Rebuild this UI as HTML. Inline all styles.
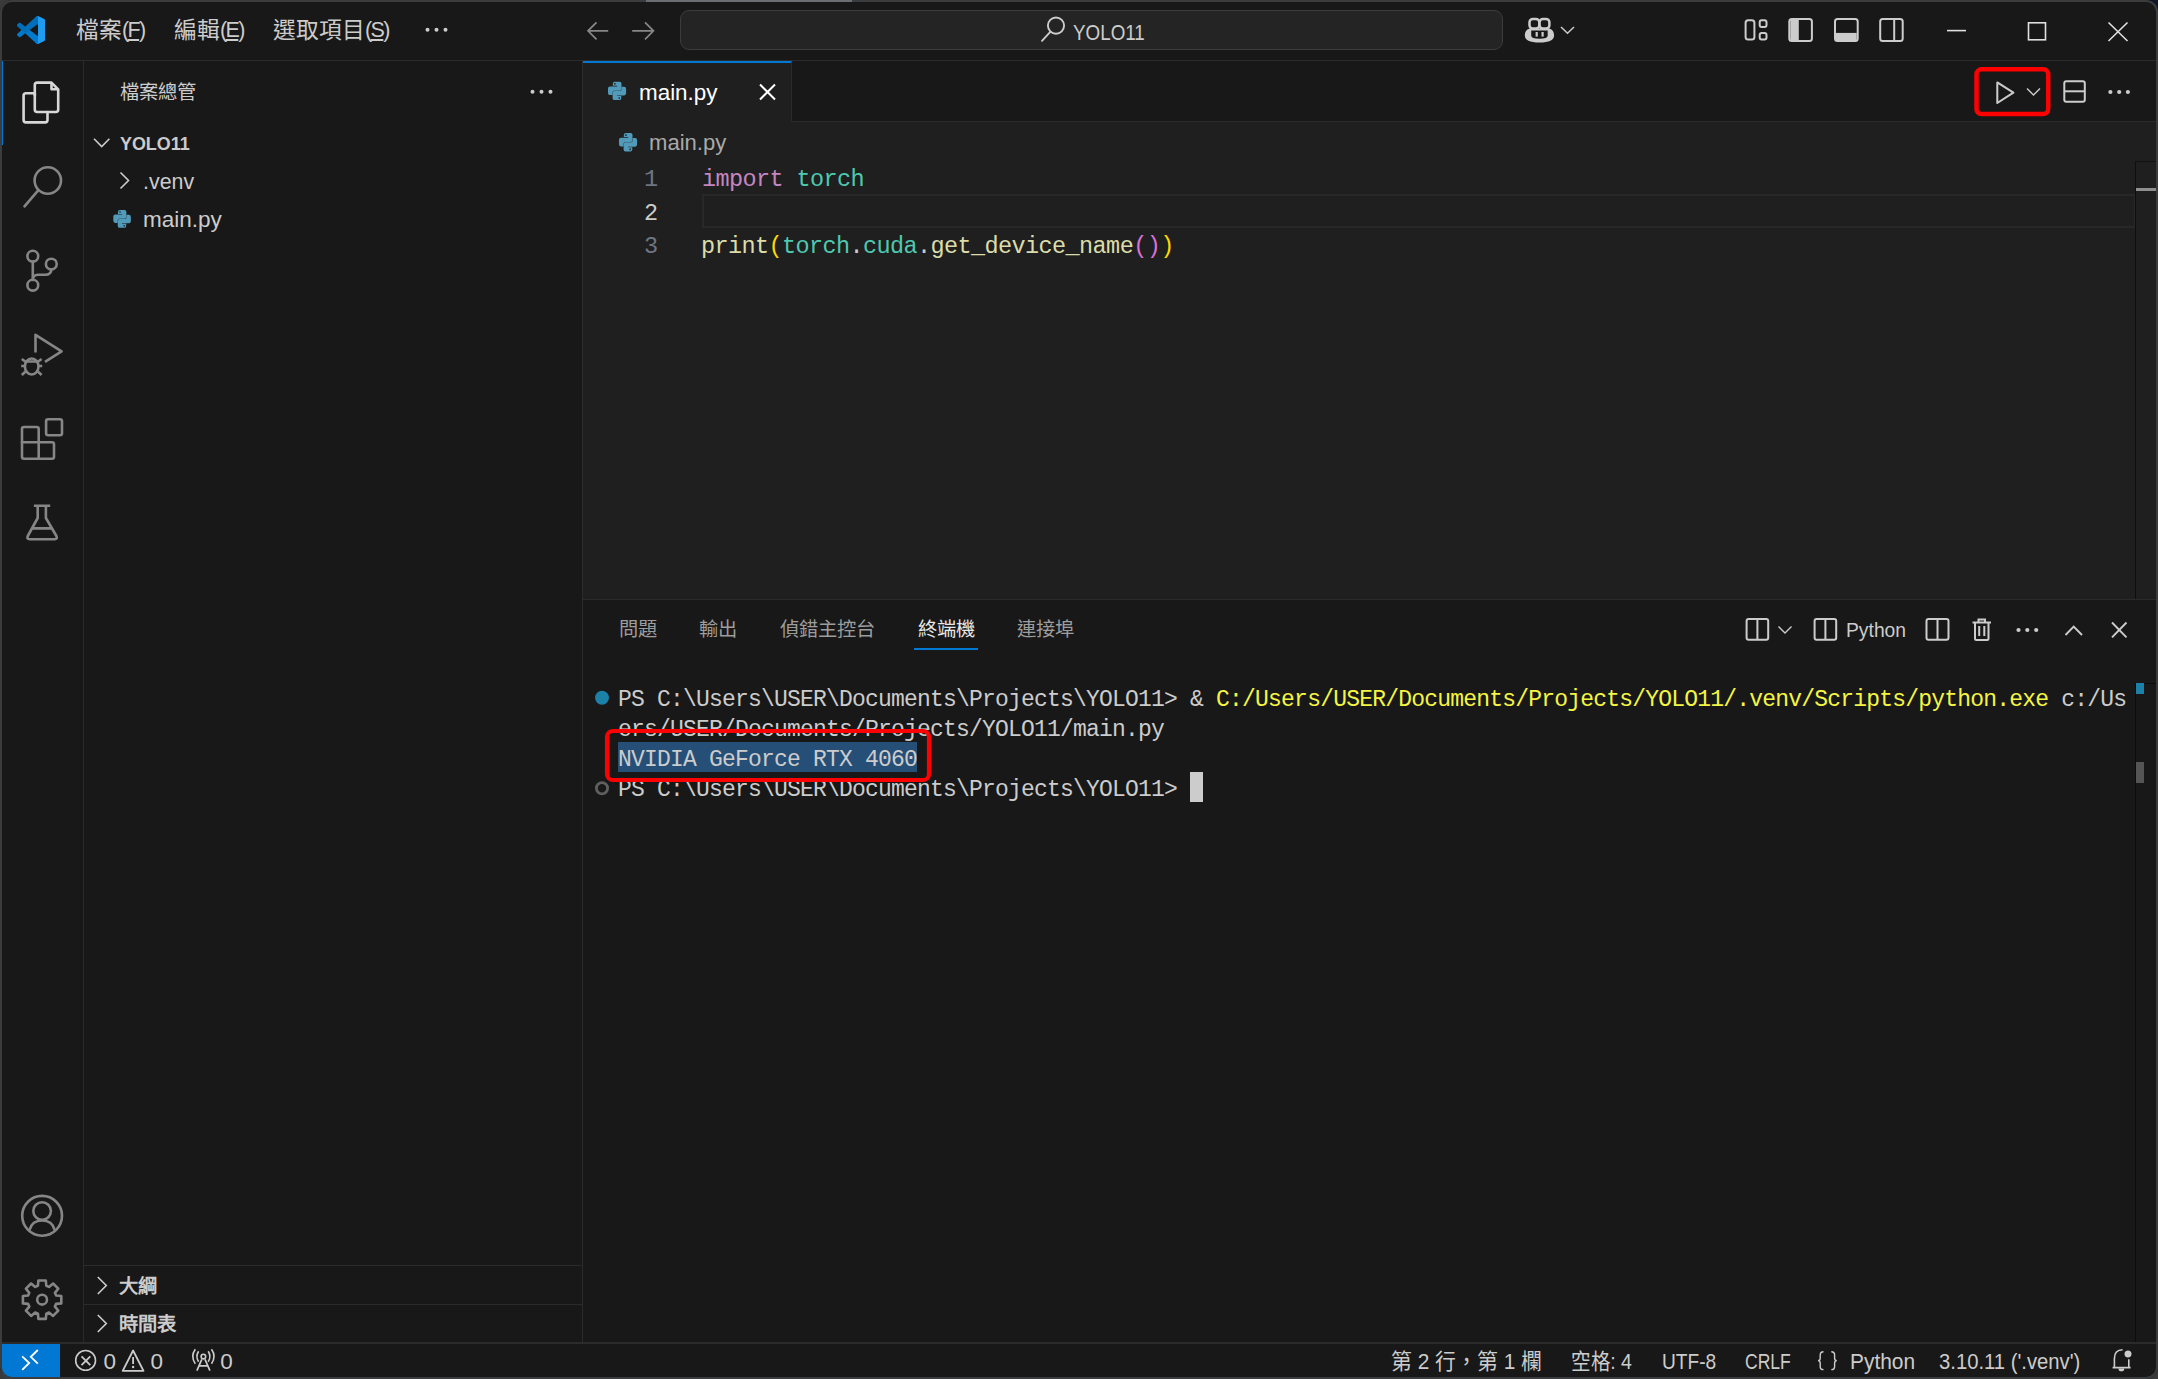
<!DOCTYPE html>
<html lang="zh-TW">
<head>
<meta charset="utf-8">
<style>
*{margin:0;padding:0;box-sizing:border-box}
html,body{width:2158px;height:1379px;overflow:hidden;background:#3a3a3a}
body{font-family:"Liberation Sans",sans-serif;color:#cccccc;position:relative}
.a{position:absolute}
#win{position:absolute;left:0;top:0;width:2158px;height:1379px;background:#181818;border-radius:12px;overflow:hidden}
#frame{position:absolute;left:0;top:0;width:2158px;height:1379px;border:2px solid #3b3c3e;border-radius:12px;pointer-events:none}
.m{font-family:"Liberation Mono",monospace}
.t{position:absolute;white-space:nowrap;line-height:1}
svg.ov{position:absolute;left:0;top:0;width:2158px;height:1379px;overflow:visible}
</style>
</head>
<body>
<div class="a" style="left:0;top:0;width:12px;height:12px;background:#3a3a3a"></div>
<div class="a" style="left:2146px;top:0;width:12px;height:12px;background:#0f1626"></div>
<div id="win">
  <!-- ============ TITLE BAR ============ -->
  <div class="a" style="left:0;top:60px;width:2158px;height:1px;background:#2b2b2b"></div>
  <div class="t" style="left:76px;top:19px;font-size:22.75px">檔案<span style="font-size:21.5px;letter-spacing:-1.6px;position:relative;top:-1.5px">(<u>F</u>)</span></div>
  <div class="t" style="left:174px;top:19px;font-size:22.75px">編輯<span style="font-size:21.5px;letter-spacing:-1.6px;position:relative;top:-1.5px">(<u>E</u>)</span></div>
  <div class="t" style="left:273px;top:19px;font-size:22.75px">選取項目<span style="font-size:21.5px;letter-spacing:-1.6px;position:relative;top:-1.5px">(<u>S</u>)</span></div>
  <div class="a" style="left:680px;top:10px;width:823px;height:40px;background:#242424;border:1px solid #3c3c3c;border-radius:9px"></div>
  <div class="t" style="left:1073px;top:21.6px;font-size:22.2px;color:#cccccc;transform:scaleX(0.848);transform-origin:0 0">YOLO11</div>

  <!-- ============ ACTIVITY BAR ============ -->
  <div class="a" style="left:83px;top:61px;width:1px;height:1282px;background:#2b2b2b"></div>
  <div class="a" style="left:2px;top:61px;width:1.3px;height:84px;background:#0078d4"></div>

  <!-- ============ SIDEBAR ============ -->
  <div class="a" style="left:582px;top:61px;width:1px;height:1282px;background:#2b2b2b"></div>
  <div class="t" style="left:120px;top:83px;font-size:19.25px;color:#cccccc">檔案總管</div>
  <div class="t" style="left:119.5px;top:134px;font-size:19.25px;font-weight:700;color:#cccccc;transform:scaleX(0.93);transform-origin:0 0">YOLO11</div>
  <div class="t" style="left:143px;top:170px;font-size:22.75px;color:#cccccc;transform:scaleX(0.94);transform-origin:0 0">.venv</div>
  <div class="t" style="left:143px;top:208px;font-size:22.75px;color:#cccccc;transform:scaleX(0.99);transform-origin:0 0">main.py</div>
  <div class="a" style="left:84px;top:1265px;width:498px;height:1px;background:#2b2b2b"></div>
  <div class="a" style="left:84px;top:1304px;width:498px;height:1px;background:#2b2b2b"></div>
  <div class="t" style="left:119px;top:1276.5px;font-size:19.25px;font-weight:700;color:#cccccc">大綱</div>
  <div class="t" style="left:119px;top:1314.5px;font-size:19.25px;font-weight:700;color:#cccccc">時間表</div>

  <!-- ============ EDITOR ============ -->
  <div class="a" style="left:583px;top:122px;width:1575px;height:477px;background:#1f1f1f"></div>
  <div class="a" style="left:792px;top:121px;width:1366px;height:1px;background:#2b2b2b"></div>
  <div class="a" style="left:583px;top:61px;width:209px;height:61px;background:#1f1f1f;border-top:2px solid #0078d4;border-right:1px solid #2b2b2b"></div>
  <div class="t" style="left:638.5px;top:81px;font-size:22.75px;color:#ffffff;transform:scaleX(0.985);transform-origin:0 0">main.py</div>
  <div class="t" style="left:649px;top:130.5px;font-size:22.75px;color:#a9a9a9;transform:scaleX(0.97);transform-origin:0 0">main.py</div>
  <!-- line highlight -->
  <div class="a" style="left:702px;top:194px;width:1434px;height:34px;border:2px solid #282828"></div>
  <!-- scrollbar track -->
  <div class="a" style="left:2135px;top:161px;width:1px;height:438px;background:#0e0e0e"></div>
  <div class="a" style="left:2135px;top:161px;width:21px;height:1px;background:#111111"></div>
  <div class="a" style="left:2136px;top:188px;width:20px;height:3px;background:#8f8f8f"></div>
  <div class="t m" style="left:644px;top:168px;font-size:23.5px;color:#6e7681">1</div>
  <div class="t m" style="left:644px;top:202px;font-size:23.5px;color:#cccccc">2</div>
  <div class="t m" style="left:644px;top:235px;font-size:23.5px;color:#6e7681">3</div>
  <div class="t m" style="left:702px;top:168px;font-size:23.5px;letter-spacing:-0.6px"><span style="color:#c586c0">import</span> <span style="color:#4ec9b0">torch</span></div>
  <div class="t m" style="left:701px;top:235px;font-size:23.5px;letter-spacing:-0.6px"><span style="color:#dcdcaa">print</span><span style="color:#ffd700">(</span><span style="color:#4ec9b0">torch</span><span style="color:#cccccc">.</span><span style="color:#4ec9b0">cuda</span><span style="color:#cccccc">.</span><span style="color:#dcdcaa">get_device_name</span><span style="color:#da70d6">()</span><span style="color:#ffd700">)</span></div>

  <!-- ============ PANEL ============ -->
  <div class="a" style="left:583px;top:599px;width:1575px;height:1px;background:#2b2b2b"></div>
  <div class="t" style="left:619px;top:620px;font-size:19.25px;color:#9d9d9d">問題</div>
  <div class="t" style="left:699px;top:620px;font-size:19.25px;color:#9d9d9d">輸出</div>
  <div class="t" style="left:780px;top:620px;font-size:19.25px;color:#9d9d9d">偵錯主控台</div>
  <div class="t" style="left:918px;top:620px;font-size:19.25px;color:#e7e7e7">終端機</div>
  <div class="a" style="left:914px;top:648px;width:64px;height:2px;background:#0078d4"></div>
  <div class="t" style="left:1017px;top:620px;font-size:19.25px;color:#9d9d9d">連接埠</div>
  <div class="t" style="left:1846px;top:620.2px;font-size:20px;color:#cccccc;transform:scaleX(0.965);transform-origin:0 0">Python</div>
  <!-- terminal -->
  <div class="a" style="left:618px;top:742px;width:299px;height:30px;background:#264f78"></div>
  <div class="t m" style="left:618px;top:689px;font-size:23px;letter-spacing:-0.8px;color:#cccccc">PS C:\Users\USER\Documents\Projects\YOLO11&gt; &amp; <span style="color:#f5f543">C:/Users/USER/Documents/Projects/YOLO11/.venv/Scripts/python.exe</span> c:/Us</div>
  <div class="t m" style="left:618px;top:719px;font-size:23px;letter-spacing:-0.8px;color:#cccccc">ers/USER/Documents/Projects/YOLO11/main.py</div>
  <div class="t m" style="left:618px;top:749px;font-size:23px;letter-spacing:-0.8px;color:#cccccc">NVIDIA GeForce RTX 4060</div>
  <div class="t m" style="left:618px;top:779px;font-size:23px;letter-spacing:-0.8px;color:#cccccc">PS C:\Users\USER\Documents\Projects\YOLO11&gt;</div>
  <div class="a" style="left:1190px;top:772px;width:13px;height:30px;background:#cccccc"></div>
  <div class="a" style="left:2135px;top:683px;width:1px;height:659px;background:#0c0c0c"></div>
  <div class="a" style="left:2135px;top:683px;width:21px;height:1px;background:#0c0c0c"></div>
  <div class="a" style="left:2136px;top:683px;width:8px;height:11px;background:#1b81a8"></div>
  <div class="a" style="left:2136px;top:762px;width:8px;height:21px;background:#555555"></div>

  <!-- ============ STATUS BAR ============ -->
  <div class="a" style="left:0;top:1342px;width:2158px;height:2px;background:#2b2b2b"></div>
  <div class="a" style="left:2px;top:1344px;width:58px;height:35px;background:#0078d4"></div>
  <div class="t" style="left:103.5px;top:1351.2px;font-size:22.5px">0</div>
  <div class="t" style="left:150.5px;top:1351.2px;font-size:22.5px">0</div>
  <div class="t" style="left:220.3px;top:1351.2px;font-size:22.5px">0</div>
  <div class="t" style="left:1391px;top:1351.2px;font-size:22px;transform:scaleX(0.95);transform-origin:0 0">第 2 行，第 1 欄</div>
  <div class="t" style="left:1571px;top:1351.2px;font-size:22px;transform:scaleX(0.89);transform-origin:0 0">空格: 4</div>
  <div class="t" style="left:1661.5px;top:1351.2px;font-size:22.5px;transform:scaleX(0.85);transform-origin:0 0">UTF-8</div>
  <div class="t" style="left:1745px;top:1351.2px;font-size:22.5px;transform:scaleX(0.78);transform-origin:0 0">CRLF</div>
  <div class="t" style="left:1850px;top:1351.2px;font-size:22.5px;transform:scaleX(0.93);transform-origin:0 0">Python</div>
  <div class="t" style="left:1939px;top:1351.2px;font-size:22.5px;transform:scaleX(0.9);transform-origin:0 0">3.10.11 ('.venv')</div>
</div>
<svg class="ov" width="2158" height="1379" viewBox="0 0 2158 1379">
  <defs>
    <g id="py">
      <path d="M6.8,0 H11.6 Q13.5,0 13.5,1.9 V7.3 Q13.5,9.1 11.7,9.1 H6.3 Q4.5,9.1 4.5,11 V13.4 H2 Q0,13.4 0,11.2 V6.8 Q0,4.7 2,4.7 H9.1 V4.1 H4.8 V1.9 Q4.8,0 6.8,0 Z" fill="#519aba"/>
      <path d="M6.8,0 H11.6 Q13.5,0 13.5,1.9 V7.3 Q13.5,9.1 11.7,9.1 H6.3 Q4.5,9.1 4.5,11 V13.4 H2 Q0,13.4 0,11.2 V6.8 Q0,4.7 2,4.7 H9.1 V4.1 H4.8 V1.9 Q4.8,0 6.8,0 Z" fill="#519aba" transform="rotate(180 9.05 9.2)"/>
      <circle cx="6.9" cy="2.1" r="0.85" fill="#1f1f1f"/>
      <circle cx="11.2" cy="16.3" r="0.85" fill="#1f1f1f"/>
    </g>
  </defs>
  <!-- VS Code logo -->
  <g transform="translate(17,16) scale(0.28)">
    <path fill="#007acc" d="M96.46 10.8L75.86.87a6.23 6.23 0 0 0-7.1 1.2L29.33 38.05 12.15 25a4.16 4.16 0 0 0-5.32.24L1.33 30.26a4.16 4.16 0 0 0 0 6.16L16.23 50 1.33 63.58a4.16 4.16 0 0 0 0 6.16l5.5 5a4.16 4.16 0 0 0 5.32.24l17.18-13.05 39.43 35.98a6.23 6.23 0 0 0 7.1 1.2l20.6-9.92A6.24 6.24 0 0 0 100 83.6V16.4a6.24 6.24 0 0 0-3.54-5.6zM75 72.73L45.1 50 75 27.27z"/>
    <path fill="#0065a9" d="M68.76 2.07L29.33 38.05 12.15 25a4.16 4.16 0 0 0-5.32.24L1.33 30.26a4.16 4.16 0 0 0 0 6.16L16.23 50 29.33 61.95 45.1 50 75 27.27V4.7a3.66 3.66 0 0 0-6.24-2.63z" opacity="0.55"/>
    <path fill="#1f9cf0" d="M75.86 .87L96.46 10.8A6.24 6.24 0 0 1 100 16.4V83.6a6.24 6.24 0 0 1-3.54 5.62L75.86 99.13a6.23 6.23 0 0 1-7.1-1.2A3.66 3.66 0 0 0 75 95.3V4.7a3.66 3.66 0 0 0-6.24-2.63A6.23 6.23 0 0 1 75.86.87z"/>
  </g>
  <!-- menu dots -->
  <g fill="#cccccc"><circle cx="427.5" cy="29.8" r="2"/><circle cx="436.5" cy="29.8" r="2"/><circle cx="445.5" cy="29.8" r="2"/></g>
  <!-- back/forward -->
  <g fill="none" stroke="#878787" stroke-width="1.7" stroke-linecap="butt" stroke-linejoin="miter">
    <path d="M588,30.8 H608.2 M596.5,22.3 L588,30.8 L596.5,39.3"/>
    <path d="M632.2,30.8 H653.5 M645,22.3 L653.5,30.8 L645,39.3"/>
  </g>
  <!-- command center search -->
  <g fill="none" stroke="#cccccc" stroke-width="1.9" stroke-linecap="round">
    <circle cx="1056" cy="25.6" r="8.1"/>
    <path d="M1042,40.8 L1050.3,31.8"/>
  </g>
  <!-- copilot -->
  <path fill-rule="evenodd" fill="#cccccc" d="M1529.5,28.4 Q1524.8,30 1524.8,35.2 Q1524.8,42.5 1539.45,42.5 Q1554.1,42.5 1554.1,35.2 Q1554.1,30 1549.4,28.4 Z M1531.2,30.6 H1547.7 V35.6 Q1547.7,38.8 1539.45,38.8 Q1531.2,38.8 1531.2,35.6 Z"/>
  <g fill="#181818" stroke="#cccccc" stroke-width="2.5">
    <rect x="1529.5" y="18.9" width="9.8" height="9.6" rx="3.3"/>
    <rect x="1539.6" y="18.9" width="9.8" height="9.6" rx="3.3"/>
  </g>
  <g fill="#cccccc"><rect x="1535.6" y="32" width="2.2" height="4.6"/><rect x="1541.5" y="32" width="2.2" height="4.6"/></g>
  <path d="M1561,27 L1567.5,33.3 L1574,27" fill="none" stroke="#cccccc" stroke-width="1.5"/>
  <!-- layout controls -->
  <g fill="none" stroke="#cccccc" stroke-width="2">
    <rect x="1745.6" y="20.2" width="8.8" height="19.2" rx="2.5"/>
    <rect x="1759.7" y="20.3" width="6.8" height="6.6" rx="2"/>
    <rect x="1759.7" y="33" width="6.8" height="6.4" rx="2"/>
    <rect x="1789.3" y="18.9" width="22.6" height="22.2" rx="2.5"/>
    <rect x="1835" y="18.9" width="22.7" height="22.2" rx="2.5"/>
    <rect x="1880.2" y="18.9" width="22.5" height="22.2" rx="2.5"/>
    <path d="M1894.2,19 V41"/>
  </g>
  <g fill="#cccccc">
    <path d="M1790.3,20 H1798.8 V40 H1790.3 Z"/>
    <path d="M1836,32.9 H1856.7 V40 H1836 Z"/>
  </g>
  <!-- window controls -->
  <g fill="none" stroke="#e0e0e0" stroke-width="1.6">
    <path d="M1947,30.6 H1966"/>
    <rect x="2028.5" y="22.8" width="17" height="17"/>
    <path d="M2108.5,22.5 L2127.5,41 M2127.5,22.5 L2108.5,41"/>
  </g>

  <!-- ===== activity bar ===== -->
  <g fill="none" stroke="#d7d7d7" stroke-width="2.6" stroke-linejoin="round">
    <path d="M34.8,96 V85 Q34.8,82.6 37.2,82.6 H51.5 L58.2,89.3 V109.5 Q58.2,112 55.8,112 H47.5"/>
    <path d="M51.5,82.6 V89.3 H58.2"/>
    <path d="M26,93.2 H34.8 V109.5 Q34.8,112 37.2,112 H47.5 V120 Q47.5,122.4 45.1,122.4 H26 Q23.6,122.4 23.6,120 V95.6 Q23.6,93.2 26,93.2 Z"/>
  </g>
  <g fill="none" stroke="#868686" stroke-width="2.6" stroke-linecap="round" stroke-linejoin="round">
    <circle cx="47.8" cy="180.5" r="13.2"/>
    <path d="M24.5,206.3 L38.2,190.4"/>
    <!-- scm -->
    <circle cx="32.8" cy="256.2" r="5.4"/>
    <circle cx="51.3" cy="264.1" r="5.4"/>
    <circle cx="32.8" cy="285.2" r="5.4"/>
    <path d="M32.8,261.6 V279.8"/>
    <path d="M51.3,269.5 Q51.3,274.8 45,274.8 H38 Q32.8,274.8 32.8,280"/>
    <!-- debug -->
    <path d="M35.5,352.5 V334.8 L61.6,351.3 L45,361.8" stroke-linecap="butt"/>
    <ellipse cx="31.7" cy="366.5" rx="6.8" ry="8"/>
    <path d="M25,361.5 H38.4 M21.8,359 L25.5,361.8 M41.6,359 L37.9,361.8 M21.2,366 H24.8 M38.6,366 H42.2 M21.8,375 L25.6,371.5 M41.6,375 L37.8,371.5" stroke-linecap="butt"/>
    <!-- extensions -->
    <rect x="46.1" y="419.3" width="15.9" height="15.9" rx="2"/>
    <path d="M24,427 H36.7 Q38.7,427 38.7,429 V442.3 H52 Q54,442.3 54,444.3 V456.7 Q54,458.7 52,458.7 H24 Q22,458.7 22,456.7 V429 Q22,427 24,427 Z"/>
    <path d="M38.7,442.3 V458.7 M22,442.3 H38.7"/>
    <!-- flask -->
    <path d="M33.9,505.8 H50.2 M37.7,505.8 V518 L27.8,536 Q26.5,539.2 29.5,539.2 H54.7 Q57.7,539.2 56.4,536 L45.9,518 V505.8 M32.2,528.4 H51.8" stroke-linecap="butt"/>
    <!-- account -->
    <circle cx="42.1" cy="1215.8" r="19.9"/>
    <circle cx="42.1" cy="1211" r="8.8"/>
    <path d="M29.6,1229.8 Q32,1220.5 42.1,1220.5 Q52.2,1220.5 54.6,1229.8"/>
    <!-- gear -->
    <path d="M37.9,1285.7 L38.4,1280.5 L45.8,1280.5 L46.3,1285.7 L49.0,1286.9 L53.1,1283.5 L58.3,1288.7 L54.9,1292.8 L56.1,1295.5 L61.3,1296.0 L61.3,1303.4 L56.1,1303.9 L54.9,1306.6 L58.3,1310.7 L53.1,1315.9 L49.0,1312.5 L46.3,1313.7 L45.8,1318.9 L38.4,1318.9 L37.9,1313.7 L35.2,1312.5 L31.1,1315.9 L25.9,1310.7 L29.3,1306.6 L28.1,1303.9 L22.9,1303.4 L22.9,1296.0 L28.1,1295.5 L29.3,1292.8 L25.9,1288.7 L31.1,1283.5 L35.2,1286.9Z"/>
    <circle cx="42.1" cy="1299.7" r="4.9"/>
  </g>

  <!-- ===== sidebar ===== -->
  <g fill="#cccccc"><circle cx="532.5" cy="91.8" r="2"/><circle cx="541.5" cy="91.8" r="2"/><circle cx="550.5" cy="91.8" r="2"/></g>
  <g fill="none" stroke="#cccccc" stroke-width="1.6" stroke-linejoin="miter">
    <path d="M94,138.8 L101.7,146.5 L109.4,138.8"/>
    <path d="M120.5,172.5 L128.5,180.5 L120.5,188.5"/>
    <path d="M97.8,1277 L106.3,1285.5 L97.8,1294"/>
    <path d="M97.8,1315 L106.3,1323.5 L97.8,1332"/>
  </g>
  <use href="#py" transform="translate(113.3,210) scale(0.97)"/>

  <!-- ===== editor tab & actions ===== -->
  <use href="#py" transform="translate(608,81.7)"/>
  <path d="M760,84.5 L775,99.5 M775,84.5 L760,99.5" fill="none" stroke="#ffffff" stroke-width="2"/>
  <use href="#py" transform="translate(619,133)"/>
  <rect x="1976.5" y="69.3" width="71.7" height="44.7" rx="5" fill="none" stroke="#ff0000" stroke-width="4.5"/>
  <path d="M1997.3,82.4 L2013.4,92.7 L1997.3,103 Z" fill="none" stroke="#cccccc" stroke-width="2" stroke-linejoin="round"/>
  <path d="M2027,88.6 L2033.5,95.1 L2040,88.6" fill="none" stroke="#cccccc" stroke-width="1.4"/>
  <rect x="2064.3" y="81.2" width="20.5" height="20.5" rx="2" fill="none" stroke="#cccccc" stroke-width="2"/>
  <path d="M2064.3,91.3 H2084.8" stroke="#cccccc" stroke-width="2"/>
  <g fill="#cccccc"><circle cx="2110.4" cy="92" r="2.1"/><circle cx="2119.2" cy="92" r="2.1"/><circle cx="2127.9" cy="92" r="2.1"/></g>

  <!-- ===== panel toolbar ===== -->
  <g fill="none" stroke="#cccccc" stroke-width="2">
    <rect x="1746.6" y="619" width="21.6" height="20.8" rx="2"/>
    <path d="M1757.4,619 V639.8"/>
    <path d="M1778.5,626.5 L1785,633 L1791.5,626.5" stroke-width="1.4"/>
    <rect x="1814.6" y="619" width="21.6" height="20.8" rx="2"/>
    <path d="M1825.4,619 V639.8"/>
    <rect x="1926.5" y="619" width="22" height="20.8" rx="2"/>
    <path d="M1937.5,619 V639.8"/>
    <path d="M1972.5,622.5 H1991 M1978.5,622.5 V619.5 H1985 V622.5 M1975,622.5 V638.5 Q1975,640 1976.5,640 H1987 Q1988.5,640 1988.5,638.5 V622.5 M1979.2,626 V636 M1984.3,626 V636"/>
    <path d="M2065.5,635 L2073.7,626.5 L2082,635" stroke-width="1.9"/>
    <path d="M2112,622.5 L2126.5,637.3 M2126.5,622.5 L2112,637.3" stroke-width="1.9"/>
  </g>
  <g fill="#cccccc"><circle cx="2018.5" cy="630" r="2.1"/><circle cx="2027.3" cy="630" r="2.1"/><circle cx="2036.2" cy="630" r="2.1"/></g>
  <!-- terminal decorations -->
  <circle cx="602" cy="697.8" r="7" fill="#1b81a8"/>
  <circle cx="602" cy="788.2" r="5.6" fill="none" stroke="#5f5f5f" stroke-width="2.8"/>
  <rect x="607" y="731" width="322" height="49" rx="6" fill="none" stroke="#ff0000" stroke-width="4.2"/>

  <!-- ===== status bar ===== -->
  <g fill="none" stroke="#ffffff" stroke-width="1.8">
    <path d="M22.2,1356.4 L29.2,1363 L22.2,1369.8 M37.8,1350 L30.8,1356.8 L37.8,1363.6"/>
  </g>
  <g fill="none" stroke="#cccccc" stroke-width="1.8">
    <circle cx="85.6" cy="1360.4" r="9.9" stroke-width="1.6"/>
    <path d="M81.5,1356.3 L90.3,1365.1 M90.3,1356.3 L81.5,1365.1"/>
    <path d="M133.1,1350.5 L143.5,1370.8 H122.7 Z" stroke-linejoin="round"/>
    <path d="M133.1,1357 V1364"/>
    <circle cx="203.4" cy="1356.6" r="2.3" stroke-width="1.6"/>
    <path d="M201.8,1359.3 L196.9,1370.6 M205,1359.3 L209.9,1370.6 M199.2,1365.8 H207.6" stroke-width="1.7"/>
    <path d="M198.6,1351.2 Q195.2,1356.5 198.6,1361.8 M208.2,1351.2 Q211.6,1356.5 208.2,1361.8 M195.3,1349.3 Q190.2,1356.5 195.3,1363.7 M211.5,1349.3 Q216.6,1356.5 211.5,1363.7" stroke-width="1.6"/>
    <path d="M1823.5,1351.8 Q1820.2,1351.8 1820.2,1355 V1358.3 Q1820.2,1360.6 1818,1360.6 Q1820.2,1360.6 1820.2,1363 V1366.4 Q1820.2,1369.6 1823.5,1369.6 M1831.3,1351.8 Q1834.6,1351.8 1834.6,1355 V1358.3 Q1834.6,1360.6 1836.8,1360.6 Q1834.6,1360.6 1834.6,1363 V1366.4 Q1834.6,1369.6 1831.3,1369.6" stroke-width="1.4"/>
    <path d="M2112.6,1367.6 H2130.6 M2114.4,1367.6 V1358.5 Q2114.4,1350 2122.6,1349.8 M2128.8,1359.2 V1367.6" stroke-width="1.6"/>
  </g>
  <circle cx="2128" cy="1354" r="4.3" fill="#cccccc" stroke="#181818" stroke-width="1.6"/>
  <path d="M2118.5,1368.4 A2.9,2.9 0 0 0 2124.3,1368.4 Z" fill="#cccccc"/>
  <g fill="#cccccc"><circle cx="133.1" cy="1367" r="1.2"/></g>
</svg>

<div id="frame"></div>
<div class="a" style="left:646px;top:0;width:206px;height:2px;background:#6b6e73"></div>
</body>
</html>
